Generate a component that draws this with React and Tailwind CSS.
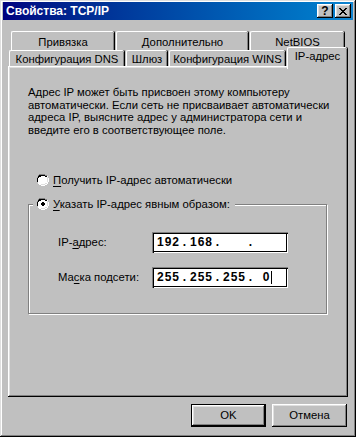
import React from 'react';

const raised =
  'shadow-[inset_-1px_-1px_#000,inset_1px_1px_#fff,inset_-2px_-2px_#808080,inset_2px_2px_#dfdfdf]';

const Radio = ({ checked }) => (
  <svg width="12" height="12" viewBox="0 0 12 12" className="shrink-0">
    <path d="M4 0h4v1h2v1h1v2h1v4h-1v2h-1v1h-2v1h-4v-1h-2v-1h-1v-2h-1v-4h1v-2h1v-1h2z" fill="#fff" />
    <path d="M4 0h4v1h2v1h-2v-1h-4v1h-2v1h-1v2h-1v-2h1v-2h1v-1h2zM0 4h1v4h-1z" fill="#808080" />
    <path d="M4 1h4v1h2v1h-2v-1h-4v1h-2v1h-1v4h-1v-4h1v-2h1v-1h2z" fill="#000" />
    <path d="M11 4h1v4h-1v2h-1v1h-2v1h-4v-1h4v-1h2v-2h1z" fill="#fff" />
    <path d="M10 3h1v5h-1v2h-2v1h-4v-1h4v-1h2z" fill="#dfdfdf" />
    {checked && <path d="M5 4h2v1h1v2h-1v1h-2v-1h-1v-2h1z" fill="#000" />}
  </svg>
);

const Tab = ({ w, children, className = '' }) => (
  <div
    className={`h-full flex justify-center border-t border-l border-white rounded-tl-[2px] rounded-tr-[2px] shadow-[inset_-1px_0_#808080,1px_0_#000] ${className}`}
    style={{ width: w }}
  >
    <span className="leading-[14px] whitespace-nowrap">{children}</span>
  </div>
);

const Segments = ({ parts, cursor }) => (
  <div className="flex items-center font-bold text-[12px] tracking-[1px] leading-[14px]">
    {parts.map((p, i) => (
      <React.Fragment key={i}>
        <span className="w-[25px] flex items-center justify-center">
          {p}
          {cursor && i === parts.length - 1 && <span className="w-[1px] h-[13px] bg-black ml-[1px]" />}
        </span>
        {i < parts.length - 1 && <span className="w-[8px] text-center">.</span>}
      </React.Fragment>
    ))}
  </div>
);

const Field = ({ parts, cursor }) => (
  <div className="w-[136px] h-[21px] bg-white pl-[4px] flex items-center shadow-[inset_1px_1px_#808080,inset_2px_2px_#000,inset_-1px_-1px_#fff,inset_-2px_-2px_#000]">
    <Segments parts={parts} cursor={cursor} />
  </div>
);

const App = () => {
  return (
    <div className="w-[356px] h-[437px] bg-[#c0c0c0] text-black text-[11.3px] font-['Liberation_Sans',Arial,sans-serif] pt-[2px] px-[3px] flex flex-col shadow-[inset_-1px_-1px_#000,inset_1px_1px_#dfdfdf,inset_-2px_-2px_#808080,inset_2px_2px_#fff] overflow-hidden">
      {/* title bar */}
      <div className="h-[18px] bg-gradient-to-r from-[#000080] to-[#1084d0] flex items-center justify-between pl-[3px] pr-[2px]">
        <span className="text-white font-bold text-[12px] leading-none">Свойства: TCP/IP</span>
        <div className="flex gap-[2px]">
          <div className={`w-[16px] h-[14px] bg-[#c0c0c0] ${raised} flex items-center justify-center`}>
            <span className="font-bold text-[12px] leading-none -mt-[1px]">?</span>
          </div>
          <div className={`w-[16px] h-[14px] bg-[#c0c0c0] ${raised} flex items-center justify-center`}>
            <svg width="8" height="7" viewBox="0 0 8 7">
              <path d="M0 0h2v1h1v1h2v-1h1v-1h2v1h-1v1h-1v1h-1v1h1v1h1v1h1v1h-2v-1h-1v-1h-2v1h-1v1h-2v-1h1v-1h1v-1h1v-1h-1v-1h-1v-1h-1z" fill="#000" />
            </svg>
          </div>
        </div>
      </div>

      <div className="px-[5px] mt-[11px] flex flex-col">
        {/* back row of tabs */}
        <div className="h-[19px] flex gap-[2px] pl-[3px] [&>div]:pt-[3px]">
          <Tab w={103}>Привязка</Tab>
          <Tab w={132}>Дополнительно</Tab>
          <Tab w={94}>NetBIOS</Tab>
        </div>
        {/* front row of tabs */}
        <div className="h-[16px] flex items-start gap-[2px] pl-[1px] [&>div]:pt-[1px]">
          <Tab w={115}>Конфигурация DNS</Tab>
          <Tab w={41}>Шлюз</Tab>
          <Tab w={116}>Конфигурация WINS</Tab>
          <div className="relative z-10 w-[60px] h-[22px] -mt-[3px] bg-[#c0c0c0] flex justify-center border-t border-l border-white rounded-tl-[2px] rounded-tr-[2px] shadow-[inset_-1px_0_#808080,1px_0_#000]">
            <span className="leading-[14px] whitespace-nowrap">IP-адрес</span>
          </div>
        </div>

        {/* panel */}
        <div className={`h-[331px] ${raised} pt-[20px] pl-[20px] flex flex-col`}>
          <p className="leading-[12.7px] whitespace-nowrap">
            Адрес IP может быть присвоен этому компьютеру
            <br />
            автоматически. Если сеть не присваивает автоматически
            <br />
            адреса IP, выясните адрес у администратора сети и
            <br />
            введите его в соответствующее поле.
          </p>

          <div className="mt-[36px] ml-[9px] h-[14px] flex items-center gap-[4px]">
            <Radio />
            <span className="leading-[14px]">
              <span className="underline underline-offset-2">П</span>олучить IP-адрес автоматически
            </span>
          </div>

          <div className="relative mt-[17px] w-[299px] h-[110px] border border-[#808080] shadow-[inset_1px_1px_#fff,1px_1px_#fff] pt-[27px] pl-[29px] flex flex-col">
            <div className="absolute -top-[8px] left-[4px] h-[14px] bg-[#c0c0c0] pl-[4px] pr-[5px] flex items-center gap-[4px]">
              <Radio checked />
              <span className="leading-[14px] whitespace-nowrap">
                <span className="underline underline-offset-2">У</span>казать IP-адрес явным образом:
              </span>
            </div>

            <div className="h-[21px] flex items-center">
              <span className="w-[94px]">
                IP-<span className="underline underline-offset-2">а</span>дрес:
              </span>
              <Field parts={['192', '168', '', '']} />
            </div>
            <div className="h-[21px] mt-[14px] flex items-center">
              <span className="w-[94px]">
                Ма<span className="underline underline-offset-2">с</span>ка подсети:
              </span>
              <Field parts={['255', '255', '255', '0']} cursor />
            </div>
          </div>
        </div>

        {/* buttons */}
        <div className="mt-[7px] flex justify-end gap-[6px] pr-[1px]">
          <button className="w-[75px] h-[23px] border border-black shadow-[inset_-1px_-1px_#000,inset_1px_1px_#fff,inset_-2px_-2px_#808080,inset_2px_2px_#dfdfdf] bg-[#c0c0c0] flex items-center justify-center leading-none">
            OK
          </button>
          <button className={`w-[75px] h-[23px] ${raised} bg-[#c0c0c0] flex items-center justify-center leading-none`}>
            Отмена
          </button>
        </div>
      </div>
    </div>
  );
};

export default App;
